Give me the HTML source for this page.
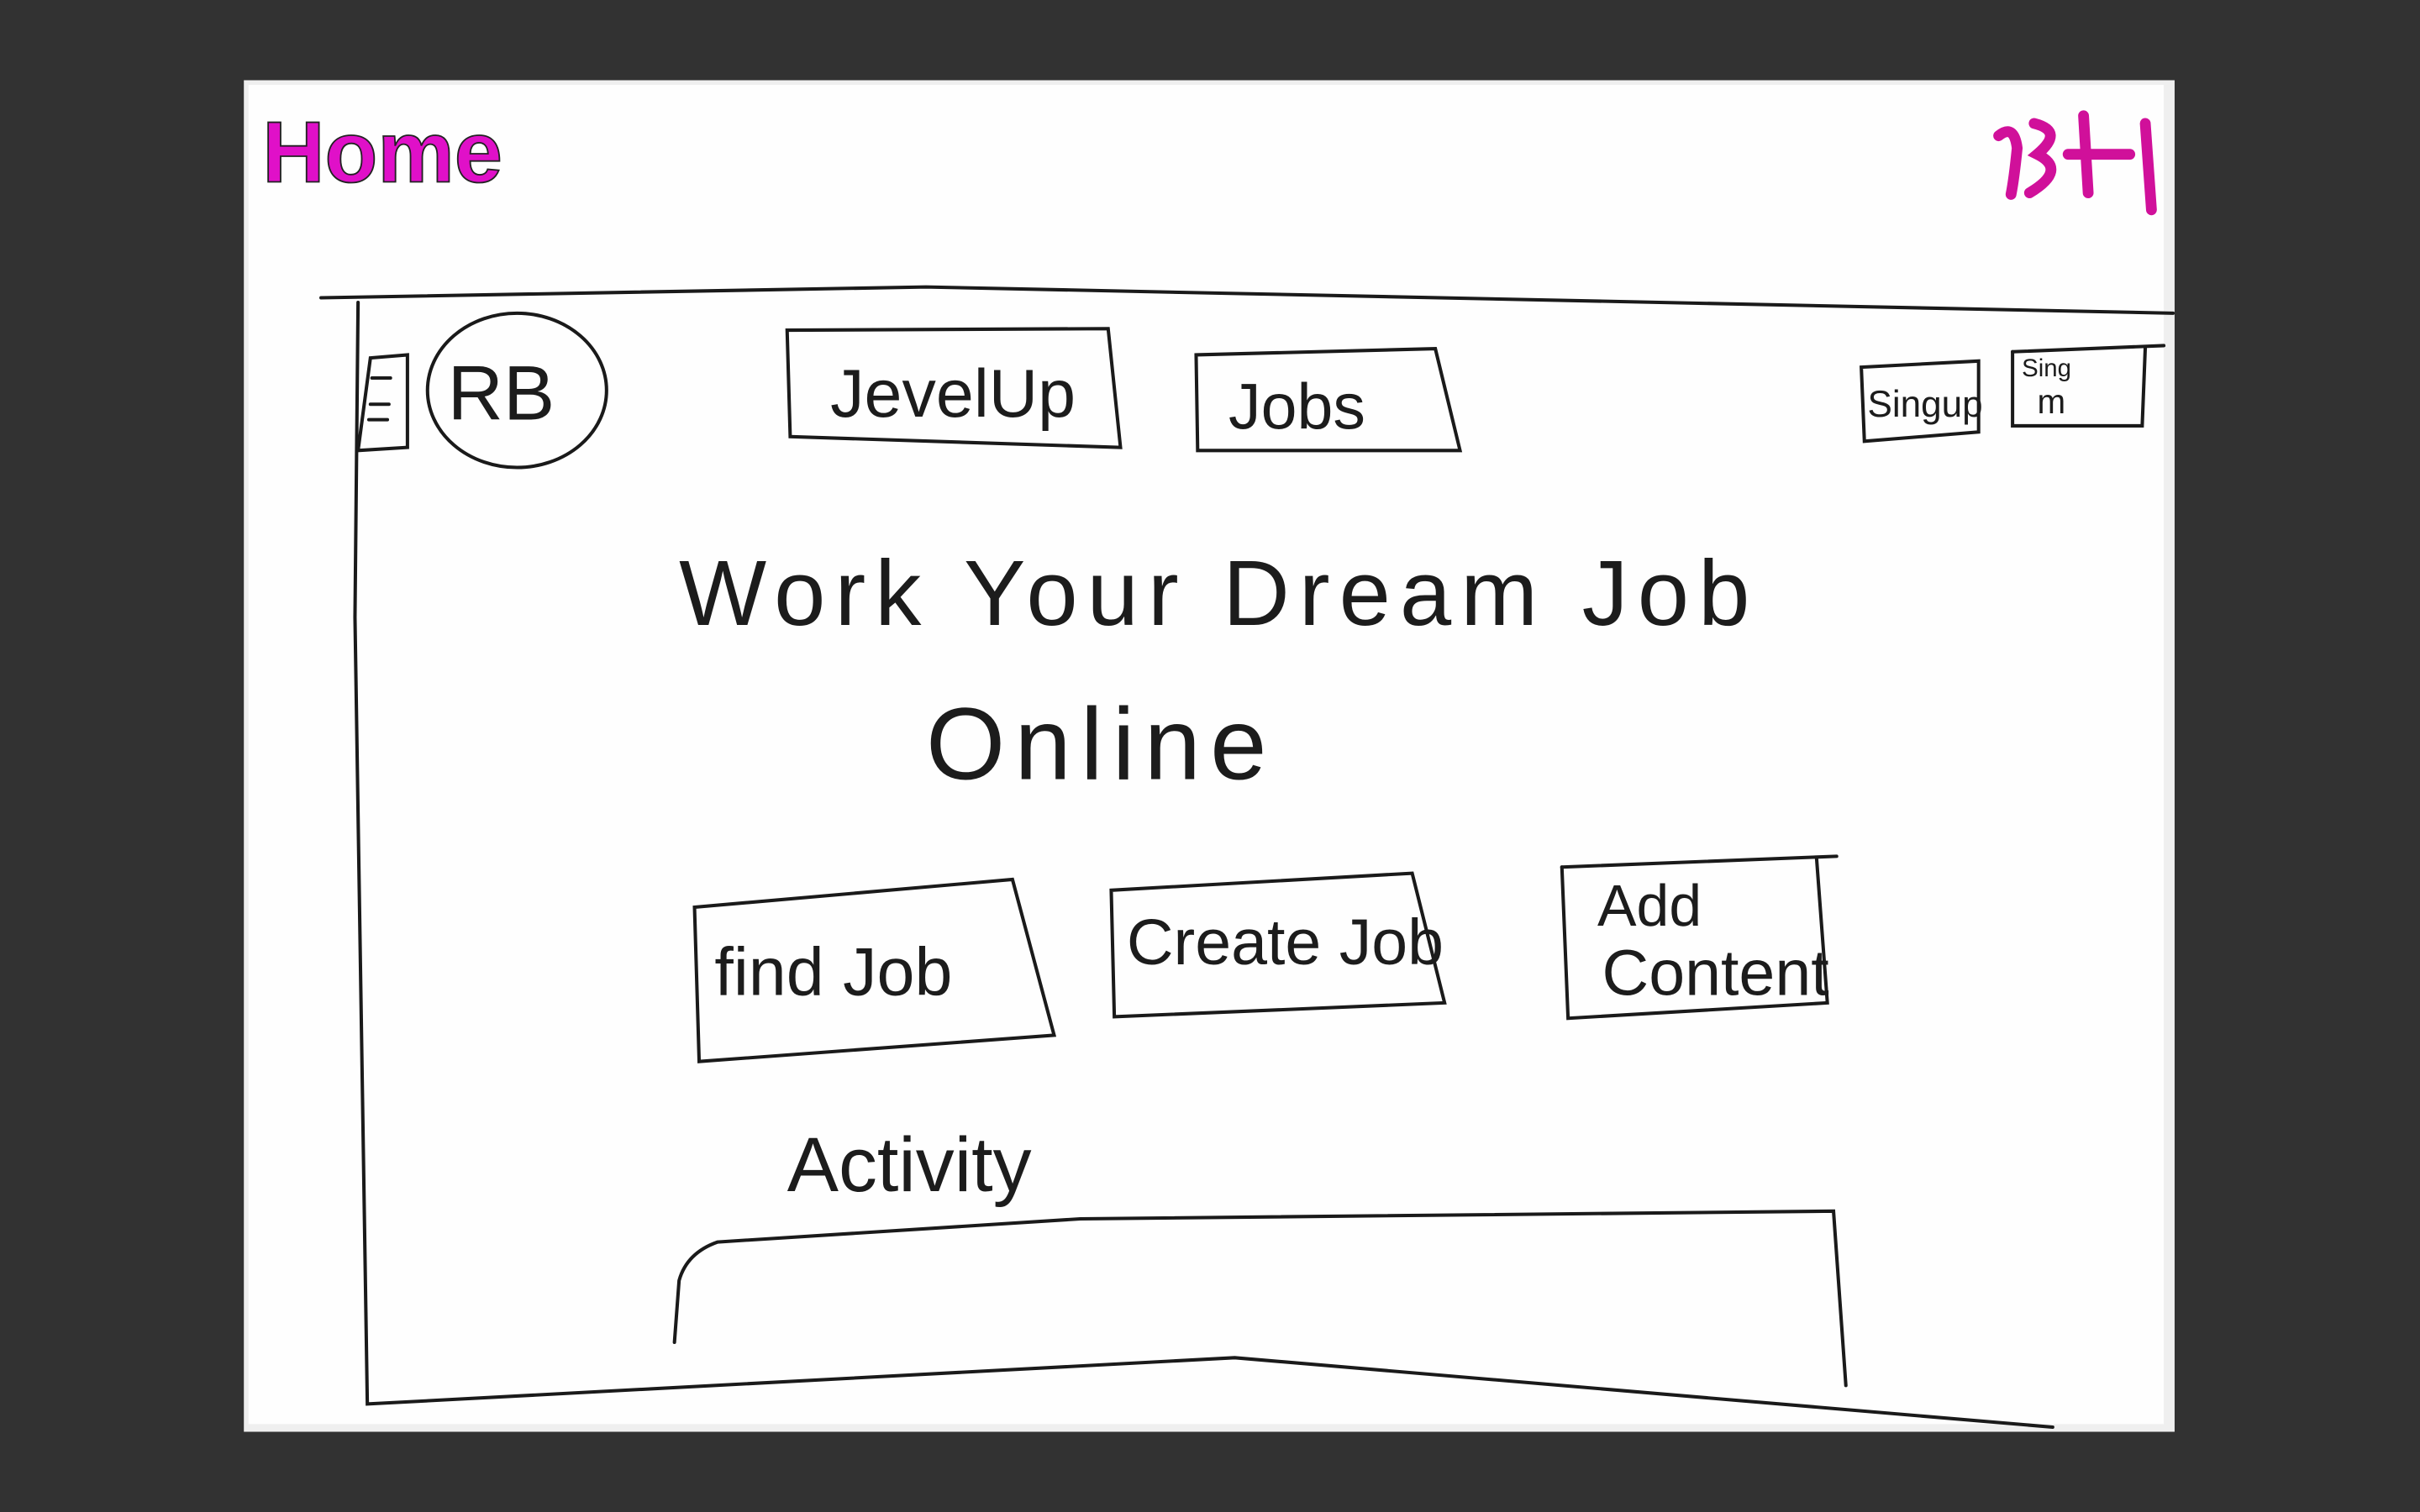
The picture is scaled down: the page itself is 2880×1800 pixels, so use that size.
<!DOCTYPE html>
<html><head><meta charset="utf-8"><style>
html,body{margin:0;padding:0;background:#323232;}
svg{display:block;width:2880px;height:1800px;}
text{font-family:"Liberation Sans",sans-serif;fill:#1c1c1c;}
</style></head><body>
<svg viewBox="0 0 1568 980" preserveAspectRatio="none" xmlns="http://www.w3.org/2000/svg">
<rect width="1568" height="980" fill="#323232"/>
<rect x="158" y="52" width="1251" height="876" fill="#efefef"/>
<rect x="161" y="55" width="1241" height="868" fill="#fefefe"/>
<g fill="none" stroke="#1a1a1a" stroke-width="2.2" stroke-linecap="round">
<path d="M208 193 L600 186 L1408 203"/>
<path d="M232 196 L230 400 L238 910 L800 880 L1330 925"/>
<path d="M240 232 L264 230 L264 290 L232 292 Z"/>
<path d="M241 245h12M240 262h12M239 272h12"/>
<ellipse cx="335" cy="253" rx="58" ry="50"/>
<path d="M510 214 L718 213 L726 290 L512 283 Z"/>
<path d="M775 230 L930 226 L946 292 L776 292 Z"/>
<path d="M1206 238 L1282 234 L1282 280 L1208 286 Z"/>
<path d="M1304 228 L1402 224"/>
<path d="M1390 225 L1388 276 L1304 276 L1304 228"/>
<path d="M450 588 L656 570 L683 671 L453 688 Z"/>
<path d="M720 577 L915 566 L936 650 L722 659 Z"/>
<path d="M1012 562 L1190 555"/>
<path d="M1177 556 L1184 650 L1016 660 L1012 562"/>
<path d="M437 870 L440 830 Q445 812 465 805 L700 790 L1188 785 L1196 898"/>
</g>
<text x="290" y="272" font-size="50">RB</text>
<text x="538" y="270" font-size="44">JevelUp</text>
<text x="796" y="278" font-size="42">Jobs</text>
<text x="1210" y="270" font-size="24">Singup</text>
<text x="1310" y="244" font-size="16">Sing</text>
<text x="1320" y="268" font-size="22">m</text>
<text x="440" y="405" font-size="60" letter-spacing="6">Work  Your Dream Job</text>
<text x="600" y="505" font-size="66" letter-spacing="6">Online</text>
<text x="463" y="645" font-size="44">find Job</text>
<text x="730" y="625" font-size="42">Create Job</text>
<text x="1035" y="600" font-size="38">Add</text>
<text x="1038" y="645" font-size="42">Content</text>
<text x="510" y="772" font-size="50">Activity</text>
<text x="170" y="118" font-size="56" font-weight="bold" style="fill:#e010c8;stroke:#222;stroke-width:1">Home</text>
<path d="M1295 88 q10 -8 12 8 q-2 20 -4 30 M1318 80 q20 5 2 20 q20 10 -5 25 M1350 75 l3 50 M1340 100 l40 0 M1390 80 l4 56" fill="none" stroke="#d0109a" stroke-width="7" stroke-linecap="round"/>
</svg>
</body></html>
